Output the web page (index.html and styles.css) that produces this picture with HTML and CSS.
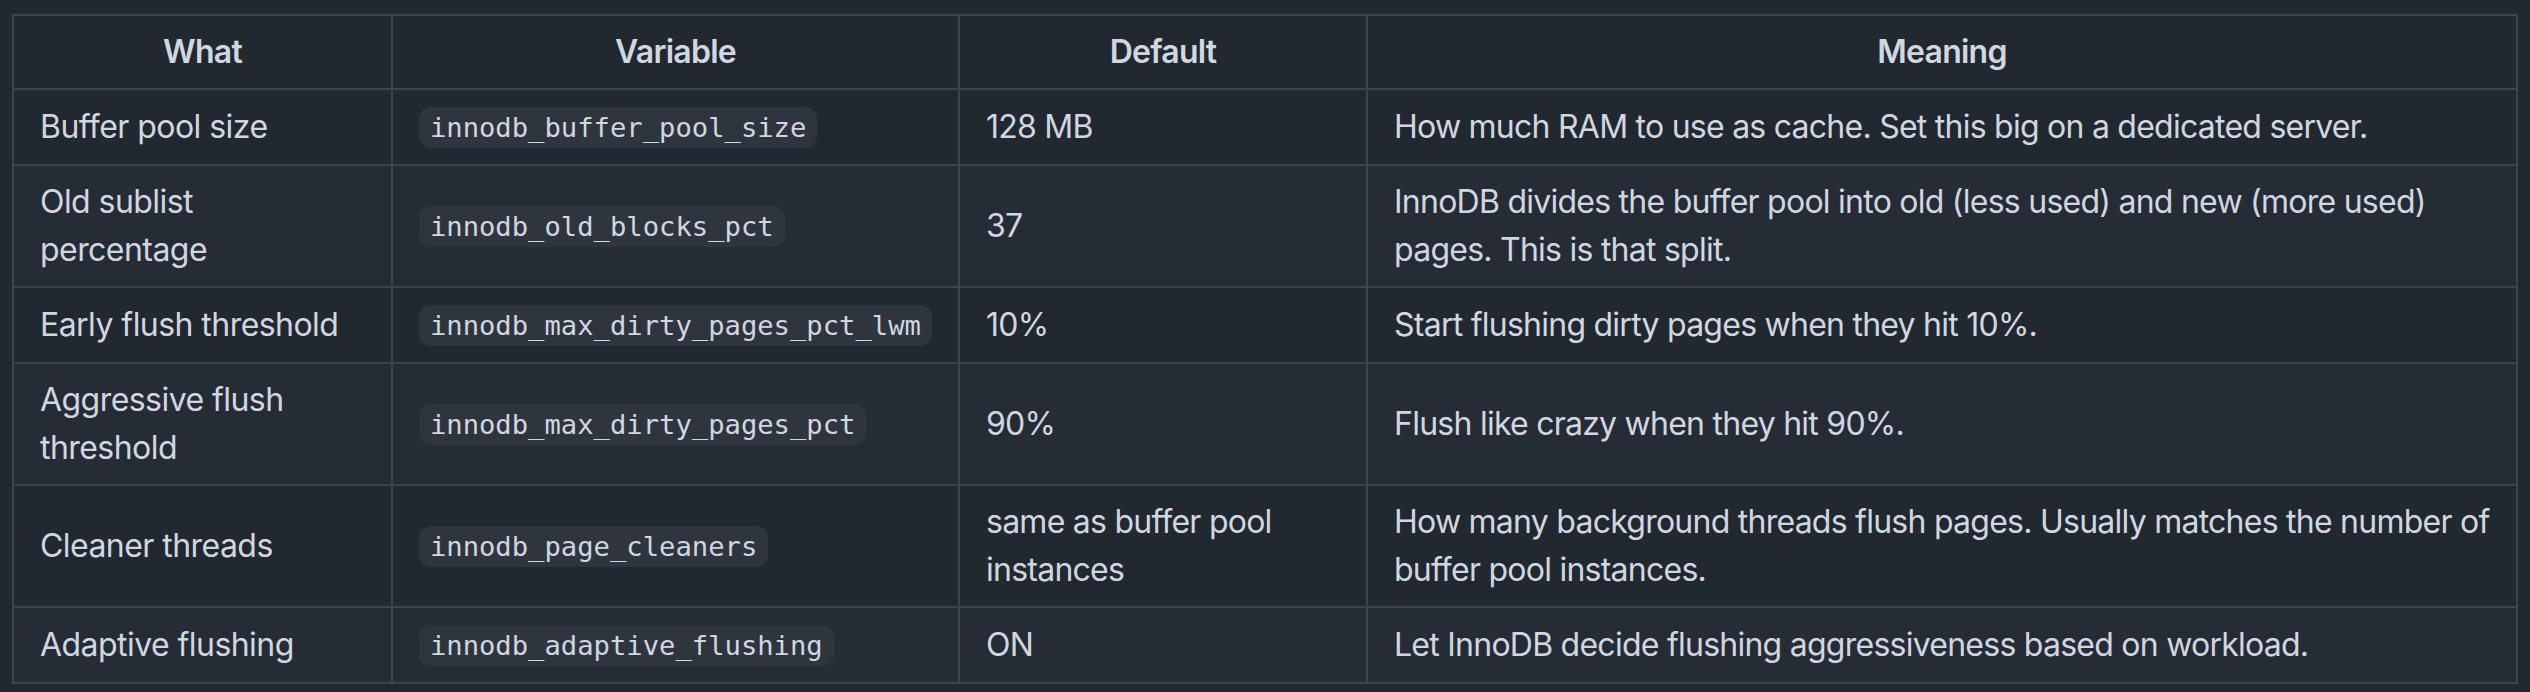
FILE: index.html
```html
<!DOCTYPE html>
<html lang="en">
<head>
<meta charset="utf-8">
<title>InnoDB buffer pool settings</title>
<link rel="stylesheet" href="styles.css">
</head>
<body>
<table class="settings">
  <colgroup>
    <col class="c-what">
    <col class="c-var">
    <col class="c-def">
    <col class="c-mean">
  </colgroup>
  <thead>
    <tr>
      <th>What</th>
      <th>Variable</th>
      <th>Default</th>
      <th>Meaning</th>
    </tr>
  </thead>
  <tbody>
    <tr>
      <td>Buffer pool size</td>
      <td><code>innodb_buffer_pool_size</code></td>
      <td>128 MB</td>
      <td>How much RAM to use as cache. Set this big on a dedicated server.</td>
    </tr>
    <tr>
      <td>Old sublist percentage</td>
      <td><code>innodb_old_blocks_pct</code></td>
      <td>37</td>
      <td>InnoDB divides the buffer pool into old (less used) and new (more used) pages. This is that split.</td>
    </tr>
    <tr>
      <td>Early flush threshold</td>
      <td><code>innodb_max_dirty_pages_pct_lwm</code></td>
      <td>10%</td>
      <td>Start flushing dirty pages when they hit 10%.</td>
    </tr>
    <tr>
      <td>Aggressive flush threshold</td>
      <td><code>innodb_max_dirty_pages_pct</code></td>
      <td>90%</td>
      <td>Flush like crazy when they hit 90%.</td>
    </tr>
    <tr>
      <td>Cleaner threads</td>
      <td><code>innodb_page_cleaners</code></td>
      <td>same as buffer pool instances</td>
      <td>How many background threads flush pages. Usually matches the number of buffer pool instances.</td>
    </tr>
    <tr>
      <td>Adaptive flushing</td>
      <td><code>innodb_adaptive_flushing</code></td>
      <td>ON</td>
      <td>Let InnoDB decide flushing aggressiveness based on workload.</td>
    </tr>
  </tbody>
</table>
</body>
</html>
```

FILE: styles.css
```css
html, body {
  margin: 0;
  padding: 0;
  background: #212830;
}

body {
  padding: 14px 12px;
  font-family: Inter, "Noto Sans", "Liberation Sans", sans-serif;
  font-size: 32px;
  line-height: 48px;
  letter-spacing: -0.75px;
  color: #d1d7e0;
}

.settings {
  width: 2506px;
  table-layout: fixed;
  border-collapse: separate;
  border-spacing: 0;
  border-top: 2px solid #3d444d;
  border-left: 2px solid #3d444d;
}

.c-what { width: 379px; }
.c-var { width: 567px; }
.c-def { width: 408px; }
.c-mean { width: 1150px; }

.settings th,
.settings td {
  padding: 12px 26px;
  border-right: 2px solid #3d444d;
  border-bottom: 2px solid #3d444d;
  vertical-align: middle;
  text-align: left;
}

.settings td:first-child {
  letter-spacing: -0.55px;
}

.settings th {
  font-weight: 600;
  text-align: center;
}

.settings thead tr,
.settings tbody tr:nth-child(odd) {
  background: #212830;
}

.settings tbody tr:nth-child(even) {
  background: #262c36;
}

.settings code {
  font-family: "DejaVu Sans Mono", "Liberation Mono", monospace;
  font-size: 27.2px;
  letter-spacing: 0;
  padding: 5.4px 10.9px;
  border-radius: 12px;
  background: #2f353e;
  color: #d1d7e0;
}
```
